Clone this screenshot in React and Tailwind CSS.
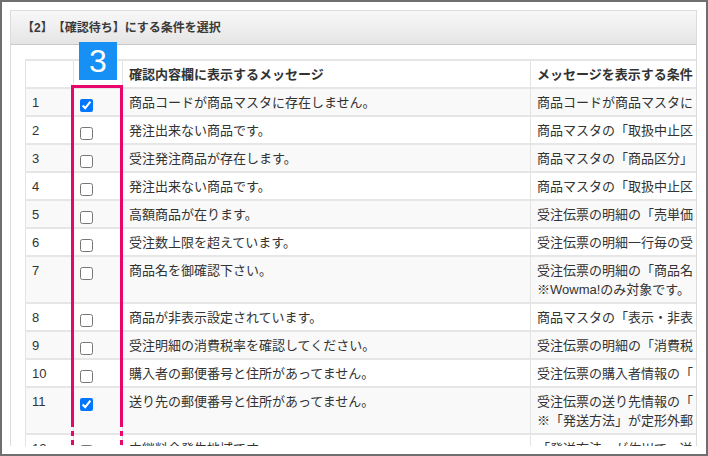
const rows = [
  { no: 1, checked: true, msg: '商品コードが商品マスタに存在しません。', cond: ['商品コードが商品マスタに'] },
  { no: 2, msg: '発注出来ない商品です。', cond: ['商品マスタの「取扱中止区'] },
  { no: 3, msg: '受注発注商品が存在します。', cond: ['商品マスタの「商品区分」'] },
  { no: 4, msg: '発注出来ない商品です。', cond: ['商品マスタの「取扱中止区'] },
  { no: 5, msg: '高額商品が在ります。', cond: ['受注伝票の明細の「売単価'] },
  { no: 6, msg: '受注数上限を超えています。', cond: ['受注伝票の明細一行毎の受'] },
  { no: 7, msg: '商品名を御確認下さい。', cond: ['受注伝票の明細の「商品名', '※Wowma!のみ対象です。'] },
  { no: 8, msg: '商品が非表示設定されています。', cond: ['商品マスタの「表示・非表'] },
  { no: 9, msg: '受注明細の消費税率を確認してください。', cond: ['受注伝票の明細の「消費税'] },
  { no: 10, msg: '購入者の郵便番号と住所があってません。', cond: ['受注伝票の購入者情報の「'] },
  { no: 11, checked: true, msg: '送り先の郵便番号と住所があってません。', cond: ['受注伝票の送り先情報の「', '※「発送方法」が定形外郵'] },
  { no: 12, msg: '中継料金発生地域です。', cond: ['「発送方法」が佐川で、送'] },
];

const td = 'border-x border-[#e3e3e3] border-t-2 border-t-[#e6e6e6] px-[6px] pt-[4px] pb-[3px] align-top leading-[19px]';
const th = 'border border-[#e3e3e3] border-t-2 border-t-[#e6e6e6] px-[6px] pt-[4px] pb-[3px] leading-[19px] text-left font-bold whitespace-nowrap';

function App() {
  return (
    <div className="w-[708px] h-[456px] border-2 border-[#6f6f6f] bg-white pt-[8px] pl-[8px] pr-[9px] pb-[8px] text-[13px] text-[#333] font-['Liberation_Sans','Noto_Sans_CJK_JP',sans-serif] [text-spacing-trim:space-all] overflow-hidden">
      <div className="relative h-full border-x border-t border-[#dcdcdc] overflow-hidden bg-white">
        {/* パネル見出し */}
        <div className="h-[34px] flex items-center pl-[11px] border-b border-[#c9c9c9] bg-linear-to-b from-[#f8f8f8] to-[#e5e5e5] text-[12px] font-semibold text-[#3a3a3a]">
          【2】【確認待ち】にする条件を選択
        </div>

        <div className="pt-[14px] pl-[14px]">
          <table className="table-fixed border-collapse w-[672px] border-l border-[#e3e3e3]">
            <colgroup>
              <col className="w-[48px]" />
              <col className="w-[49px]" />
              <col className="w-[408px]" />
              <col className="w-[167px]" />
            </colgroup>
            <thead>
              <tr className="bg-white">
                <th className={th}></th>
                <th className={th}></th>
                <th className={th}>確認内容欄に表示するメッセージ</th>
                <th className={th}>メッセージを表示する条件</th>
              </tr>
            </thead>
            <tbody>
              {rows.map((r) => (
                <tr key={r.no} className={r.no % 2 === 1 ? 'bg-[#f9f9f9]' : 'bg-white'}>
                  <td className={td}>{r.no}</td>
                  <td className={td}>
                    <input type="checkbox" defaultChecked={!!r.checked} className="block mx-0 mb-0 mt-[6px] w-[13px] h-[13px]" />
                  </td>
                  <td className={td + ' whitespace-nowrap'}>{r.msg}</td>
                  <td className={td + ' whitespace-nowrap'}>
                    {r.cond.map((c, i) => (
                      <div key={i}>{c}</div>
                    ))}
                  </td>
                </tr>
              ))}
            </tbody>
          </table>
        </div>

        {/* 注釈：番号バッジと枠 */}
        <div className="absolute left-[68px] top-[31px] w-[38px] h-[38px] bg-[#1690f5] text-white flex items-center justify-center text-[32px] leading-none font-['Liberation_Sans',sans-serif]">
          3
        </div>
        <div className="absolute left-[60px] top-[74px] w-[52px] h-[342px] border-[3px] border-b-0 border-[#e8056d]"></div>
        <div className="absolute left-[60px] top-[420px] w-[52px] flex flex-col gap-[4px]">
          {[0, 1].map((i) => (
            <div key={i} className="h-[5px] flex justify-between">
              <div className="w-[3px] bg-[#e8056d]"></div>
              <div className="w-[3px] bg-[#e8056d]"></div>
            </div>
          ))}
        </div>
      </div>
    </div>
  );
}

export default App;
